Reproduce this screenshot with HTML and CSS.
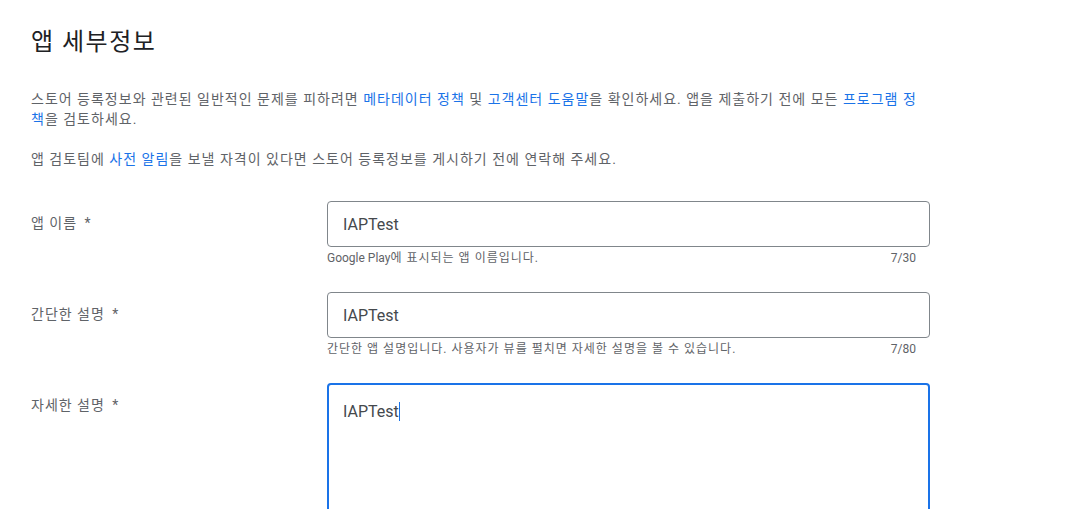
FILE: index.html
```html
<!DOCTYPE html>
<html lang="ko">
<head>
<meta charset="utf-8">
<link rel="stylesheet" href="styles.css">
</head>
<body>
<main class="page">
  <h1 class="title">앱 세부정보</h1>
  <p class="intro">스토어 등록정보와 관련된 일반적인 문제를 피하려면 <a class="link">메타데이터 정책</a> 및 <a class="link">고객센터 도움말</a>을 확인하세요. 앱을 제출하기 전에 모든 <a class="link">프로그램 정책</a>을 검토하세요.</p>
  <p class="intro">앱 검토팀에 <a class="link">사전 알림</a>을 보낼 자격이 있다면 스토어 등록정보를 게시하기 전에 연락해 주세요.</p>

  <div class="field-row">
    <div class="field-label">앱 이름 <span class="req">*</span></div>
    <div class="field-control">
      <div class="input-box">IAPTest</div>
      <div class="helper"><span><span class="latin">Google Play</span>에 표시되는 앱 이름입니다.</span><span class="latin">7/30</span></div>
    </div>
  </div>

  <div class="field-row">
    <div class="field-label">간단한 설명 <span class="req">*</span></div>
    <div class="field-control">
      <div class="input-box">IAPTest</div>
      <div class="helper"><span>간단한 앱 설명입니다. 사용자가 뷰를 펼치면 자세한 설명을 볼 수 있습니다.</span><span class="latin">7/80</span></div>
    </div>
  </div>

  <div class="field-row">
    <div class="field-label">자세한 설명 <span class="req">*</span></div>
    <div class="field-control">
      <div class="textarea-box">IAPTest<span class="caret"></span></div>
    </div>
  </div>
</main>
</body>
</html>
```

FILE: styles.css
```css
html, body {
  margin: 0;
  padding: 0;
  background: #ffffff;
}
body {
  font-family: Roboto, "Noto Sans CJK KR", sans-serif;
  color: #5f6368;
  overflow: hidden;
}
.page {
  padding: 0 140px 0 31px;
  width: 899px;
}
.title {
  margin: 0;
  padding-top: 28px;
  font-size: 24px;
  line-height: 28px;
  font-weight: 400;
  letter-spacing: 1.5px;
  color: #202124;
}
.intro {
  margin: 0;
  font-size: 14px;
  line-height: 20px;
  letter-spacing: 1px;
  color: #5f6368;
}
.title + .intro {
  margin-top: 33px;
}
.intro + .intro {
  margin-top: 20px;
}
.link {
  color: #1a73e8;
  text-decoration: none;
}
.field-row {
  display: grid;
  grid-template-columns: 296px 603px;
  margin-top: 32px;
}
.field-row + .field-row {
  margin-top: 26px;
}
.field-label {
  font-size: 14px;
  line-height: 20px;
  letter-spacing: 1px;
  padding-top: 12px;
  color: #5f6368;
}
.req {
  margin-left: 3px;
}
.input-box {
  box-sizing: border-box;
  height: 46px;
  border: 1px solid #80868b;
  border-radius: 4px;
  padding: 0 15px;
  display: flex;
  align-items: center;
  font-size: 16px;
  color: #45494d;
}
.helper {
  display: flex;
  justify-content: space-between;
  padding: 3px 14px 0 0;
  font-size: 12px;
  line-height: 16px;
  letter-spacing: 1px;
  color: #5f6368;
}
.latin {
  letter-spacing: 0;
}
.textarea-box {
  box-sizing: border-box;
  height: 160px;
  border: 2px solid #1a73e8;
  border-radius: 4px;
  padding: 16px 14px 14px;
  font-size: 16px;
  line-height: 22px;
  color: #45494d;
}
.caret {
  display: inline-block;
  width: 1px;
  height: 19px;
  background: #1a73e8;
  vertical-align: -4px;
}
```
